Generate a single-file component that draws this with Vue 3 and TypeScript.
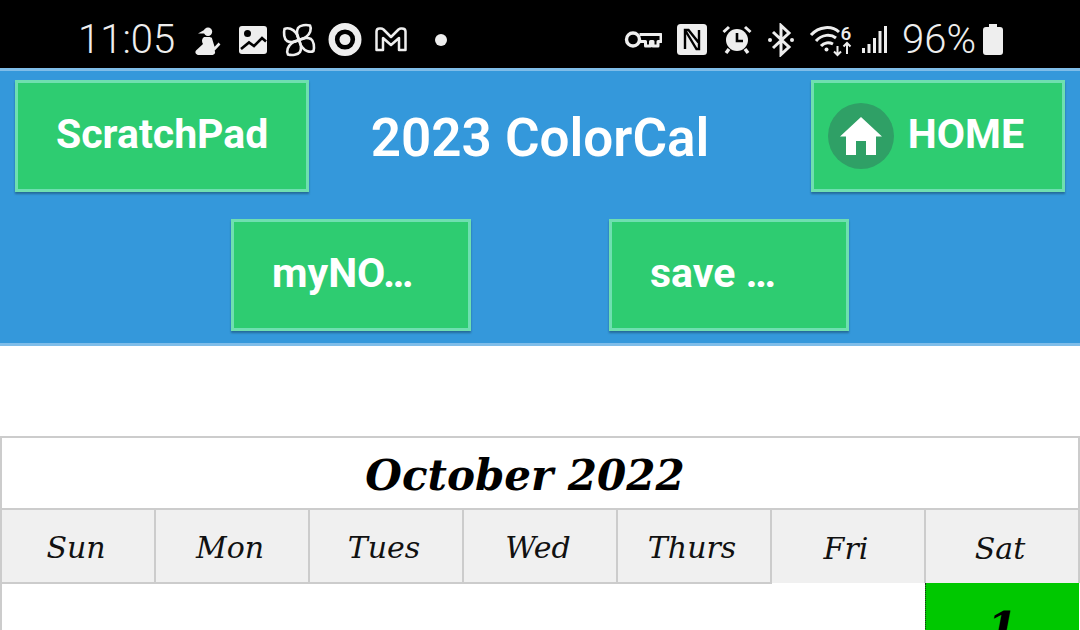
<script setup lang="ts">
const days = ["Sun", "Mon", "Tues", "Wed", "Thurs", "Fri", "Sat"];
const bars = [
  { x: 1, h: 5 },
  { x: 6.5, h: 9 },
  { x: 12, h: 15 },
  { x: 17.5, h: 22 },
  { x: 23, h: 27 },
];
const blade = "M17 17C15 13 14.500 8 16 5C18 2 24 1.500 28 2.500C30 6 28 11 24 14C22 16 19 16.500 17 17z";
</script>

<template>
  <div class="page">
    <div class="status">
      <div class="status-left">
        <span class="clock">11:05</span>
        <!-- figure with ponytail -->
        <svg class="ico" viewBox="0 0 34 34" width="34" height="34">
          <circle cx="18" cy="8.700" r="4.200" fill="#eee" />
          <path d="M8 10.500L15 6.500 15.500 10.500z" fill="#eee" />
          <path d="M14 14h6.500l2.500 7c.5 2 0 4 0 5.500 1.500 1 2.500 2 2 3.500-.5 1.500-2 2-3.500 2H9c-3 0-4.500-2.500-3-4.500l7-6.500c-1.500-2.500-1.500-5 1-7z" fill="#eee" />
          <path d="M20.500 15l3.500 11.500 5.500-6" fill="none" stroke="#eee" stroke-width="2.600" />
        </svg>
        <!-- picture -->
        <svg class="ico" viewBox="0 0 34 34" width="34" height="34">
          <rect x="3" y="3" width="28" height="28" rx="3" fill="#eee" />
          <circle cx="11.500" cy="10.500" r="3.500" fill="#000" />
          <path d="M5 26l8-6.500 5 3.500 8-8 4 3.500" fill="none" stroke="#000" stroke-width="2.600" />
        </svg>
        <!-- pinwheel -->
        <svg class="ico" viewBox="0 0 34 34" width="34" height="34">
          <g fill="none" stroke="#eee" stroke-width="2.600" stroke-linejoin="round">
            <path :d="blade" />
            <path :d="blade" transform="rotate(90 17 17)" />
            <path :d="blade" transform="rotate(180 17 17)" />
            <path :d="blade" transform="rotate(270 17 17)" />
          </g>
        </svg>
        <!-- target -->
        <svg class="ico" viewBox="0 0 34 34" width="34" height="34">
          <circle cx="17" cy="16.500" r="13.300" fill="none" stroke="#eee" stroke-width="6.400" />
          <circle cx="17" cy="16.500" r="5.500" fill="#eee" />
        </svg>
        <!-- mail M -->
        <svg class="ico" viewBox="0 0 34 34" width="34" height="34">
          <path d="M2.500 8.500c0-2 1-3 3-3h1.500c1 0 1.700.4 2.500 1l7.500 7.500 7.500-7.500c.8-.6 1.500-1 2.500-1H28c2 0 3.500 1 3.500 3v18.500h-6.500V15l-8 7-8-7v12H2.500z" fill="none" stroke="#eee" stroke-width="2.500" stroke-linejoin="round" />
        </svg>
        <span class="dot"></span>
      </div>
      <div class="status-right">
        <!-- vpn key -->
        <svg class="ico" viewBox="0 0 38 34" width="38" height="34">
          <circle cx="9" cy="16.500" r="6.500" fill="none" stroke="#eee" stroke-width="3.400" />
          <path d="M15.500 11.500H37v7h-3v4.500h-5v-4.500h-2.500v4.500h-5v-4.500h-6" fill="none" stroke="#eee" stroke-width="3" stroke-linejoin="round" />
        </svg>
        <!-- nfc -->
        <svg class="ico" viewBox="0 0 30 34" width="30" height="34">
          <rect x="0" y="1" width="30" height="31" rx="3.500" fill="#eee" />
          <path d="M8 26V7h3.500L22 20V7M8 7l11.500 19H22v-5" fill="none" stroke="#000" stroke-width="2.400" />
        </svg>
        <!-- alarm -->
        <svg class="ico" viewBox="0 0 30 34" width="30" height="34">
          <circle cx="15" cy="17" r="11" fill="#eee" />
          <path d="M15 10v8h6" fill="none" stroke="#000" stroke-width="2.600" />
          <path d="M1.500 9L7 4M28.500 9L23 4" stroke="#eee" stroke-width="3" />
          <path d="M7 26l-3 4M23 26l3 4" stroke="#eee" stroke-width="3.400" />
        </svg>
        <!-- bluetooth -->
        <svg class="ico" viewBox="0 0 28 34" width="28" height="34">
          <path d="M6 9l16 15-8 7.500V2.500l8 7.500-16 15" fill="none" stroke="#eee" stroke-width="3" />
          <circle cx="3" cy="17" r="2" fill="#eee" />
          <circle cx="25" cy="17" r="2" fill="#eee" />
        </svg>
        <!-- wifi with 6 and arrows -->
        <svg class="ico wifi" viewBox="0 0 44 34" width="44" height="34">
          <path d="M1 12C9 3 22 2.500 29 9" fill="none" stroke="#eee" stroke-width="3" />
          <path d="M6 18C12 11 21 11 26 15" fill="none" stroke="#eee" stroke-width="3" />
          <path d="M11 23c3-3.500 8-4 12-2" fill="none" stroke="#eee" stroke-width="3" />
          <circle cx="16.500" cy="26.500" r="2" fill="#eee" />
          <text x="30.500" y="17" class="six">6</text>
          <path d="M27.500 23v9M24 28.500l3.500 3.500 3.500-3.500" fill="none" stroke="#eee" stroke-width="2" />
          <path d="M37 31v-11M33.500 23.500l3.500-3.500 3.500 3.500" fill="none" stroke="#eee" stroke-width="2" />
        </svg>
        <!-- signal -->
        <svg class="ico signal" viewBox="0 0 28 34" width="28" height="34">
          <rect v-for="b in bars" :key="b.x" :x="b.x" :y="30 - b.h" width="3" :height="b.h" fill="#eee" />
        </svg>
        <span class="pct">96%</span>
        <!-- battery -->
        <svg class="ico" viewBox="0 0 20 34" width="20" height="34">
          <path d="M6 1h8v3h3c2 0 3 1 3 3v22c0 2-1 3-3 3H3c-2 0-3-1-3-3V7c0-2 1-3 3-3h3z" fill="#eee" />
        </svg>
      </div>
    </div>

    <header class="header">
      <div class="top-row">
        <a class="btn scratch">ScratchPad</a>
        <h1 class="title">2023 ColorCal</h1>
        <a class="btn home">
          <span class="home-ico">
            <svg viewBox="0 0 42 38" width="42" height="38">
              <path d="M21 0L42 19.500H36V38H26V24H16V38H6V19.500H0z" fill="#fff" />
            </svg>
          </span>
          <span class="home-label">HOME</span>
        </a>
      </div>
      <div class="sub-row">
        <a class="btn wide">myNO…</a>
        <a class="btn wide">save …</a>
      </div>
    </header>

    <table class="cal">
      <caption class="month">October 2022</caption>
      <thead>
        <tr>
          <th v-for="(d, i) in days" :key="d" :class="{ open: i > 4 }">{{ d }}</th>
        </tr>
      </thead>
      <tbody>
        <tr>
          <td class="blank" colspan="6"></td>
          <td class="day">1</td>
        </tr>
      </tbody>
    </table>
  </div>
</template>

<style>
html,
body {
  background: #fff;
}
</style>

<style scoped>
.page {
  width: 1080px;
  height: 630px;
  overflow: hidden;
  font-family: Roboto, sans-serif;
}
.status {
  height: 68px;
  box-sizing: border-box;
  padding: 12px 77px 0 78px;
  background: #000;
  color: #eee;
  display: flex;
  justify-content: space-between;
  align-items: center;
}
.status-left,
.status-right {
  display: flex;
  align-items: center;
}
.ico {
  display: block;
  flex: none;
}
.wifi {
  overflow: visible;
}
.clock,
.pct {
  font-size: 40px;
  font-weight: 300;
  line-height: 34px;
}
.status-left {
  gap: 12px;
}
.clock {
  margin-right: 3px;
}
.dot {
  width: 12px;
  height: 12px;
  margin-left: 15px;
  border-radius: 50%;
  background: #eee;
}
.status-right {
  gap: 15px;
}
.six {
  font-size: 19px;
  font-weight: 500;
  fill: #eee;
}
.signal {
  margin-left: -8px;
}
.pct {
  margin-left: -2px;
  margin-right: -8px;
}
.header {
  box-sizing: border-box;
  height: 278px;
  padding: 9px 15px 0;
  background: #3498db;
  border-top: 3px solid #7fbde9;
  border-bottom: 3px solid #7fbde9;
}
.top-row {
  display: grid;
  grid-template-columns: 1fr auto 1fr;
  align-items: center;
}
.title {
  margin: 0;
  padding-top: 4px;
  color: #fff;
  font-size: 53px;
  font-weight: 600;
  line-height: 108px;
}
.btn {
  box-sizing: border-box;
  height: 112px;
  display: flex;
  align-items: center;
  padding: 0 38px 4px;
  background: #2ecc71;
  border: 3px solid #6fdfb0;
  box-shadow: 0 2px 2px rgba(0, 0, 0, 0.3);
  color: #fff;
  font-size: 41px;
  font-weight: 700;
  white-space: nowrap;
}
.scratch {
  justify-self: start;
}
.home {
  justify-self: end;
  padding: 0 38px 0 14px;
  gap: 14px;
}
.home-label {
  margin-bottom: 4px;
}
.home-ico {
  width: 66px;
  height: 66px;
  border-radius: 50%;
  background: #2fa066;
  display: flex;
  align-items: center;
  justify-content: center;
}
.sub-row {
  display: flex;
  justify-content: center;
  gap: 138px;
  margin-top: 27px;
}
.wide {
  width: 240px;
}
.cal {
  width: 1080px;
  margin-top: 90px;
  table-layout: fixed;
  border-collapse: collapse;
  font-family: "DejaVu Serif", "Liberation Serif", serif;
  font-style: italic;
  color: #111;
}
.month {
  box-sizing: border-box;
  height: 72px;
  padding: 6px 30px 0 0;
  line-height: 64px;
  border: 2px solid #ccc;
  border-bottom: none;
  font-size: 42px;
  font-weight: 700;
  color: #000;
}
th {
  height: 69px;
  padding: 3px 4px 0 0;
  border: 2px solid #ccc;
  background: #f0f0f0;
  font-size: 30px;
  font-weight: 400;
}
th.open {
  border-bottom: none;
}
.blank {
  border: none;
  border-left: 2px solid #ccc;
  height: 60px;
}
.day {
  padding: 0;
  background: #00c800;
  border-left: 1px dotted #222;
  text-align: center;
  vertical-align: top;
  font-size: 44px;
  font-weight: 700;
  line-height: 92px;
  color: #000;
}
</style>
